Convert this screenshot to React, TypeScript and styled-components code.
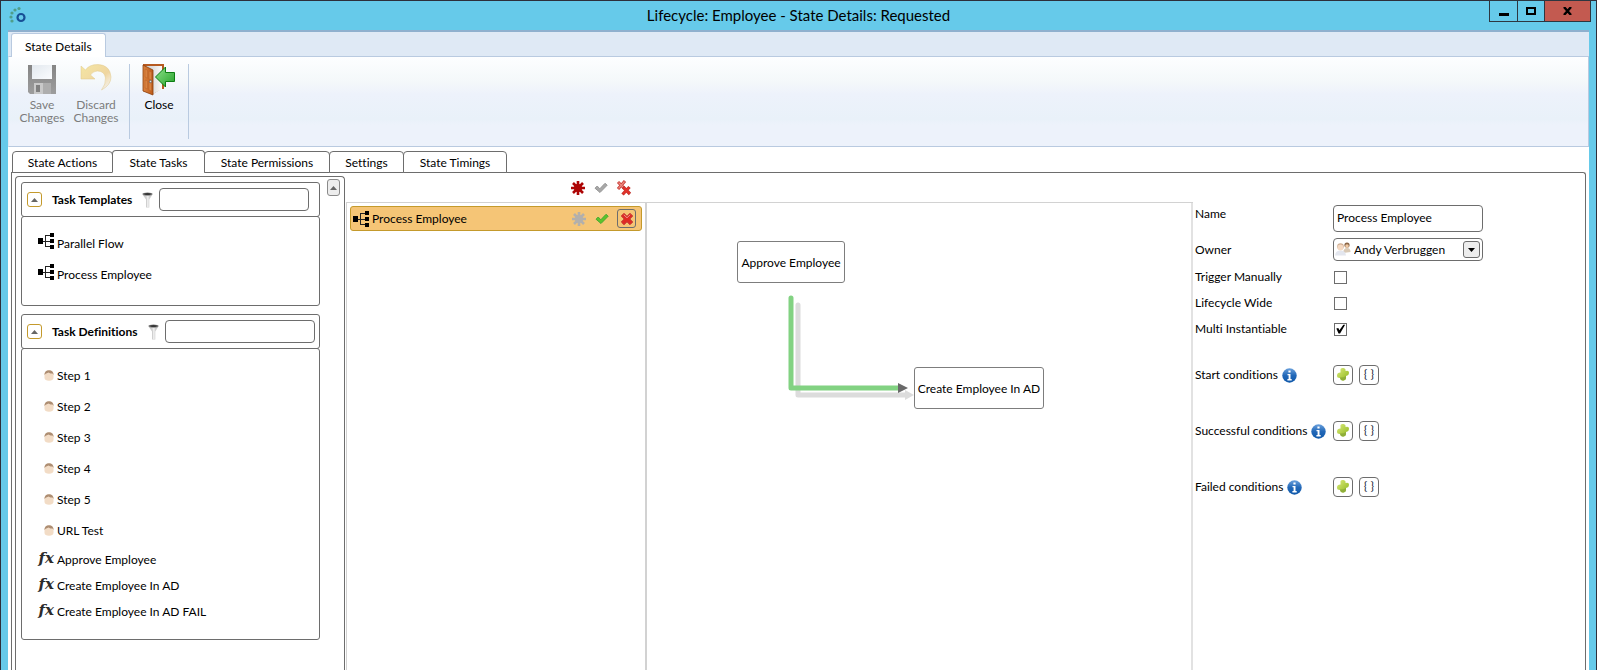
import React from "react";
import styled, { createGlobalStyle, css } from "styled-components";

const line = "#6d6d6d";
const softLine = "#d2d2d2";
const sky = "#66caea";

const GlobalStyle = createGlobalStyle`
  *, *::before, *::after { box-sizing: border-box; }
  html, body { margin: 0; height: 100%; }
  body { background: #fff; overflow: hidden; }
  #root { height: 100%; }
  body, button, input, select {
    font-family: Lato, "Open Sans", sans-serif;
    font-size: 12px;
    line-height: 16px;
    font-variant-ligatures: none;
    color: #000;
  }
  ul { list-style: none; margin: 0; padding: 0; }
  svg { display: block; flex: none; }
`;

/* ---------- window frame ---------- */

const Window = styled.div`
  display: flex;
  flex-direction: column;
  min-height: 100%;
  padding: 0 7px;
  background: ${sky};
  border: 1px solid #2d2f3b;
  border-bottom: 0;
`;

const TitleBar = styled.header`
  position: relative;
  display: flex;
  justify-content: center;
  height: 29px;
  padding-top: 4px;
`;

const Logo = styled.svg`
  position: absolute;
  left: 1px;
  top: 5px;
`;

const WindowTitle = styled.h1`
  margin: 0;
  font-size: 15px;
  line-height: 20px;
  font-weight: 400;
`;

const WindowButtons = styled.div`
  position: absolute;
  right: -2px;
  top: -1px;
  display: flex;
  border: 1px solid #2d3640;
`;

const WindowButton = styled.button<{ $wide?: boolean }>`
  display: flex;
  align-items: center;
  justify-content: center;
  width: ${(p) => (p.$wide ? 46 : 27)}px;
  height: 20px;
  padding: 0;
  border: 0;
  background: ${(p) => (p.$wide ? "#c35a50" : sky)};
  & + & { border-left: 1px solid #2d3640; }
`;

const Client = styled.div`
  flex: 1;
  display: flex;
  flex-direction: column;
  background: #fff;
  border-top: 2px solid #8fb0ce;
`;

/* ---------- ribbon ---------- */

const RibbonTabs = styled.div`
  display: flex;
  align-items: flex-end;
  height: 25px;
  padding-left: 3px;
  margin-bottom: -1px;
  background: #dfe9f5;
`;

const RibbonTab = styled.button`
  position: relative;
  height: 24px;
  padding: 3px 13px 0;
  border: 1px solid #b9cae0;
  border-bottom: 0;
  border-radius: 3px 3px 0 0;
  background: #fff;
`;

const Ribbon = styled.div`
  display: flex;
  height: 91px;
  padding: 7px 0;
  border: 1px solid #b9cae0;
  border-left-color: #dfe9f5;
  background: linear-gradient(#fdfeff, #f4f8fa 28%, #edf2fb 42%, #e9f1f9 70%, #edf2fb 76%);
`;

const RibbonGroup = styled.div<{ $narrow?: boolean }>`
  display: flex;
  justify-content: center;
  gap: 2px;
  height: 75px;
  padding: 0 ${(p) => (p.$narrow ? 3 : 7)}px;
  border-right: 1px solid #b9cae0;
`;

const RibbonButton = styled.button`
  display: flex;
  flex-direction: column;
  align-items: center;
  gap: 2px;
  width: 52px;
  height: 64px;
  padding: 0;
  border: 0;
  background: none;
  line-height: 13px;
  &:disabled { color: #7c7c7c; }
`;

/* ---------- page tabs ---------- */

const Tabs = styled.div`
  display: flex;
  align-items: flex-end;
  height: 26px;
  padding-left: 4px;
  margin-bottom: -1px;
`;

const Tab = styled.button<{ $active?: boolean; $width: number }>`
  position: relative;
  width: ${(p) => p.$width}px;
  height: ${(p) => (p.$active ? 23 : 22)}px;
  padding: 2px 0 0;
  border: 1px solid ${line};
  border-radius: 4px 4px 0 0;
  background: #fff;
  & + & { margin-left: -1px; }
  ${(p) => p.$active && css`border-bottom-color: #fff;`}
`;

const TabPanel = styled.main`
  flex: 1;
  display: flex;
  margin: 0 3px;
  border: 1px solid ${line};
  border-bottom: 0;
  border-radius: 0 3px 0 0;
`;

/* ---------- left side ---------- */

const Sidebar = styled.aside`
  display: flex;
  justify-content: space-between;
  align-items: flex-start;
  flex: none;
  width: 330px;
  margin: 3px 0 0 3px;
  padding: 5px 4px 0 5px;
  border: 1px solid ${line};
  border-bottom: 0;
  border-radius: 4px 4px 0 0;
`;

const Groups = styled.div`
  display: flex;
  flex-direction: column;
  gap: 8px;
  width: 299px;
`;

const GroupHeader = styled.div`
  display: flex;
  align-items: center;
  height: 35px;
  padding-left: 5px;
  border: 1px solid ${line};
  border-radius: 3px;
`;

const GroupTitle = styled.h2`
  margin: 0 10px;
  font-size: 12px;
  line-height: 16px;
  font-weight: 700;
  white-space: nowrap;
`;

const Expander = styled.button`
  display: flex;
  align-items: center;
  justify-content: center;
  flex: none;
  width: 15px;
  height: 15px;
  padding: 0;
  border: 1px solid #c49a2c;
  border-radius: 3px;
  background: #fff;
`;

const FilterInput = styled.input`
  flex: none;
  width: 150px;
  height: 23px;
  margin-left: 6px;
  padding: 0 4px;
  border: 1px solid ${line};
  border-radius: 4px;
`;

const GroupBody = styled.ul`
  margin-top: -1px;
  padding: 12px 16px 14px;
  border: 1px solid ${line};
  border-radius: 3px;
`;

const Item = styled.li<{ $short?: boolean }>`
  display: flex;
  align-items: center;
  gap: 3px;
  height: ${(p) => (p.$short ? 26 : 31)}px;
  padding-bottom: ${(p) => (p.$short ? 0 : 2)}px;
`;

const ItemIcon = styled.span<{ $raised?: boolean }>`
  display: flex;
  justify-content: flex-end;
  width: 16px;
  padding-bottom: ${(p) => (p.$raised ? 5 : 0)}px;
`;

const Fx = styled.span`
  font: italic 700 15px/18px "DejaVu Serif", serif;
  color: #2b2b2b;
`;

const ScrollUp = styled.button`
  display: flex;
  align-items: center;
  justify-content: center;
  width: 13px;
  height: 17px;
  margin-top: -3px;
  padding: 0;
  border: 1px solid #8a8a8a;
  border-radius: 3px;
  background: #ededed;
`;

/* ---------- process list and canvas ---------- */

const Center = styled.section`
  flex: 1;
  display: flex;
  flex-direction: column;
  margin-left: 1px;
`;

const Actions = styled.div`
  display: flex;
  align-items: center;
  gap: 7px;
`;

const ListToolbar = styled(Actions)`
  justify-content: flex-end;
  width: 301px;
  height: 29px;
  padding-right: 15px;
`;

const Split = styled.div`
  flex: 1;
  display: flex;
  border-top: 1px solid ${softLine};
`;

const ProcessList = styled.div`
  width: 301px;
  padding: 3px;
  border-left: 1px solid ${softLine};
  border-right: 2px solid ${softLine};
`;

const ProcessRow = styled.div`
  display: flex;
  align-items: center;
  gap: 3px;
  height: 25px;
  padding: 0 5px 0 2px;
  border: 1px solid #c49a2c;
  border-radius: 3px;
  background: #f5c576;
  ${Actions} { margin-left: auto; }
`;

const IconButton = styled.button<{ $framed?: boolean }>`
  display: flex;
  align-items: center;
  justify-content: center;
  width: ${(p) => (p.$framed ? 19 : 16)}px;
  height: ${(p) => (p.$framed ? 19 : 16)}px;
  padding: 0;
  border: ${(p) => (p.$framed ? `1px solid ${line}` : "0")};
  border-radius: 3px;
  background: none;
`;

const Canvas = styled.div`
  position: relative;
  flex: 1;
  border-right: 2px solid #e2e2e2;
`;

const Node = styled.div<{ $x: number; $y: number; $w: number }>`
  position: absolute;
  left: ${(p) => p.$x}px;
  top: ${(p) => p.$y}px;
  display: flex;
  align-items: center;
  justify-content: center;
  width: ${(p) => p.$w}px;
  height: 42px;
  padding-top: 2px;
  border: 1px solid #7d7d7d;
  border-radius: 3px;
  background: #fff;
  white-space: nowrap;
`;

const Connector = styled.svg`
  position: absolute;
  left: 140px;
  top: 90px;
`;

/* ---------- properties form ---------- */

const Form = styled.form`
  flex: none;
  width: 392px;
  padding: 32px 0 0 2px;
`;

const Field = styled.div<{ $h: number; $top?: boolean }>`
  display: grid;
  grid-template-columns: 138px 150px;
  align-items: ${(p) => (p.$top ? "start" : "center")};
  height: ${(p) => p.$h}px;
`;

const FieldLabel = styled.label<{ $top?: boolean }>`
  display: flex;
  align-items: center;
  gap: 4px;
  padding-top: ${(p) => (p.$top ? 1 : 0)}px;
  white-space: nowrap;
`;

const TextInput = styled.input`
  width: 150px;
  height: 27px;
  padding: 0 3px 2px;
  border: 1px solid ${line};
  border-radius: 4px;
`;

const SelectBox = styled.div`
  position: relative;
`;

const Select = styled.select`
  appearance: none;
  width: 150px;
  height: 23px;
  padding: 0 22px 0 20px;
  border: 1px solid ${line};
  border-radius: 4px;
  background: #fff;
`;

const SelectAvatar = styled.svg`
  position: absolute;
  left: 2px;
  top: 3px;
  pointer-events: none;
`;

const SelectArrow = styled.span`
  position: absolute;
  right: 3px;
  top: 3px;
  display: flex;
  align-items: center;
  justify-content: center;
  width: 17px;
  height: 17px;
  border: 1px solid ${line};
  border-radius: 3px;
  background: #ededed;
  pointer-events: none;
`;

const Checkbox = styled.input`
  appearance: none;
  width: 13px;
  height: 13px;
  margin: 0 1px;
  border: 1px solid ${line};
  background: #fff;
  &:checked::before {
    content: "";
    display: block;
    height: 11px;
    background: #000;
    clip-path: polygon(12% 46%, 30% 42%, 40% 62%, 76% 12%, 92% 12%, 46% 92%, 32% 92%);
  }
`;

const Conditions = styled.div`
  display: flex;
  flex-direction: column;
  gap: 36px;
  padding-top: 23px;
`;

const ConditionButtons = styled.div`
  display: flex;
  gap: 6px;
`;

const ConditionButton = styled.button`
  display: flex;
  align-items: center;
  justify-content: center;
  width: 20px;
  height: 20px;
  padding: 0 0 2px;
  border: 1px solid ${line};
  border-radius: 4px;
  background: #fff;
  color: #1b2a3c;
  white-space: nowrap;
`;

/* ---------- drawings ---------- */

const FlowIcon = () => (
  <svg width="16" height="16" viewBox="0 0 16 16" aria-hidden="true">
    <path d="M4 8.500h9M7.500 2v12M7 2.500h6M7 13.500h6" stroke="#222" fill="none" />
    <path d="M0 5h5v6H0zM12 0h4v4h-4zM12 6h4v4h-4zM12 12h4v4h-4z" />
  </svg>
);

const FaceIcon = () => (
  <svg width="10" height="11" viewBox="0 0 10 11" aria-hidden="true">
    <path d="M.5 4Q1 .5 5 .5T9.500 4V8Q9 10.800 5 10.800.8 10.800.5 8Z" fill="#f2dcc6" />
    <path d="M.4 5Q.5.3 5 .3T9.600 5L8.500 3.600 6.500 3.600 4.500 2.500 1.700 3.800Z" fill="#ad8d72" />
  </svg>
);

const FunnelIcon = () => (
  <svg width="11" height="16" viewBox="0 0 11 16" aria-hidden="true">
    <path d="M.5 2.500h10L7.300 7.500V15.500H4V7.500Z" fill="#cfcfcf" />
    <path d="M4.500 4h2.200v11.500H5V7.500Z" fill="#ececec" />
    <ellipse cx="5.500" cy="2" rx="5" ry="1.500" fill="#777" />
    <ellipse cx="5.500" cy="2" rx="3.500" ry=".8" fill="#222" />
  </svg>
);

const Caret = ({ down, color = "#666" }: { down?: boolean; color?: string }) => (
  <svg width="7" height="4" viewBox="0 0 7 4" aria-hidden="true">
    <path d={down ? "M0 0h7L3.500 4Z" : "M0 4h7L3.500 0Z"} fill={color} />
  </svg>
);

const Asterisk = ({ color }: { color: string }) => (
  <svg width="16" height="16" viewBox="0 0 16 16" aria-hidden="true">
    <path d="M8 1v14M1 8h14M3 3l10 10M13 3L3 13" stroke={color} strokeWidth="2.600" />
    <circle cx="8" cy="8" r="4" fill={color} />
  </svg>
);

const Check = ({ fill, edge }: { fill: string; edge: string }) => (
  <svg width="16" height="16" viewBox="0 0 16 16" aria-hidden="true">
    <path d="M2 8.200L4.200 6 6.800 8.800 12 3.300 14.200 5.200 7 12.500Z" fill={fill} stroke={edge} />
  </svg>
);

const Cross = () => (
  <svg width="14" height="14" viewBox="0 0 14 14" aria-hidden="true">
    <path
      d="M4 1.300L7 4.300 10 1.300 12.700 4 9.800 7l2.900 3-2.700 2.700L7 9.800l-3 2.900L1.300 10 4.200 7 1.300 4Z"
      fill="#e02a24"
      stroke="#c23a33"
    />
    <path d="M3.800 2.800L7 5.800l3.200-3" stroke="#ee9188" fill="none" />
  </svg>
);

const DoubleCross = () => (
  <svg width="16" height="16" viewBox="0 0 16 16" aria-hidden="true">
    <path d="M2 2l6 6M9 1L2 9" stroke="#c93a33" strokeWidth="3" />
    <path d="M2.500 2.500l5 5M8.500 1.500l-6 7" stroke="#ec8a82" strokeWidth="1.200" />
    <path d="M7 7l7 7M13.500 7L6.500 14.500" stroke="#c0302a" strokeWidth="3.200" />
    <path d="M7.500 7.500l6 6M13 7.500l-6 6.500" stroke="#e2332b" strokeWidth="2" />
  </svg>
);

const InfoIcon = () => (
  <svg width="15" height="15" viewBox="0 0 15 15" aria-hidden="true">
    <defs>
      <linearGradient id="info" x2="0" y2="1">
        <stop stopColor="#6aa0dc" />
        <stop offset=".5" stopColor="#2268b8" />
        <stop offset="1" stopColor="#0f58aa" />
      </linearGradient>
    </defs>
    <circle cx="7.500" cy="7.500" r="7.200" fill="url(#info)" />
    <path d="M6.400 2.500h2.200v2H6.400zM5.500 6h3v5h1.200v1.400H5.400V11h1.200V7.300H5.500z" fill="#fff" />
  </svg>
);

const PlusIcon = () => (
  <svg width="14" height="15" viewBox="0 0 14 15" aria-hidden="true">
    <defs>
      <linearGradient id="plus" x2="1" y2="1">
        <stop stopColor="#dcec7c" />
        <stop offset="1" stopColor="#8db51b" />
      </linearGradient>
    </defs>
    <path
      d="M4.500 2Q5.500.5 7.500 1q2.500.5 2 3 3.500-1 3.500 1.500 0 3-3 3.500.5 4-2.500 4.500-3 .5-3.500-2.500Q.8 11 1 8.500 1 5.500 4.500 5.500Z"
      fill="url(#plus)"
    />
    <path d="M4 10.500q3 .5 6-1.500.5 4-2.500 4.500-3 .5-3.500-3Z" fill="#8fae3a" />
  </svg>
);

const SaveIcon = () => (
  <svg width="32" height="32" viewBox="0 0 32 32" aria-hidden="true">
    <defs>
      <linearGradient id="disk" x2="0" y2="1">
        <stop stopColor="#858585" />
        <stop offset="1" stopColor="#9d9d9d" />
      </linearGradient>
      <linearGradient id="disklabel" x2="1" y2="1">
        <stop stopColor="#e2e8ee" />
        <stop offset="1" stopColor="#fafcfe" />
      </linearGradient>
    </defs>
    <path d="M2 1h28v29H4l-2-2Z" fill="url(#disk)" />
    <path d="M6 1h20v14H6z" fill="url(#disklabel)" />
    <path d="M8 19h17v11H8z" fill="#c9c9c9" />
    <path d="M10 21h4v7h-4z" fill="#808080" />
    <path d="M17 19h8v11h-8z" fill="#aeaeae" />
  </svg>
);

const UndoIcon = () => (
  <svg width="32" height="32" viewBox="0 0 32 32" aria-hidden="true">
    <defs>
      <linearGradient id="undo" x2="1" y2="1">
        <stop stopColor="#f4e6a4" />
        <stop offset=".6" stopColor="#f0d6a0" />
        <stop offset="1" stopColor="#f3dcb4" stopOpacity="0" />
      </linearGradient>
    </defs>
    <path
      d="M1 2v13h14l-4.500-4Q13 7 17.500 7q7 0 8 7 .5 6-4 12Q31 21 31 13 30 1 18 .5 9 .5 5.500 6Z"
      fill="url(#undo)"
      stroke="#e2c98c"
      strokeOpacity=".5"
    />
  </svg>
);

const DoorIcon = () => (
  <svg width="34" height="32" viewBox="0 0 34 32" aria-hidden="true">
    <defs>
      <linearGradient id="inside" x2="1">
        <stop stopColor="#ccc" />
        <stop offset="1" stopColor="#fafafa" />
      </linearGradient>
      <linearGradient id="door" x2="1">
        <stop stopColor="#dd8440" />
        <stop offset="1" stopColor="#bd5a18" />
      </linearGradient>
      <linearGradient id="arrow" x2="1" y2="1">
        <stop stopColor="#8ee28b" />
        <stop offset="1" stopColor="#25a129" />
      </linearGradient>
    </defs>
    <path d="M1 0h21v25h-3l-8 5L1 27Z" fill="#b65a20" />
    <path d="M4 2h16v23l-9 5Z" fill="url(#inside)" />
    <path d="M1 1l10 5v25L1 27Z" fill="url(#door)" stroke="#8c3f0d" strokeWidth=".8" />
    <path
      d="M3 5l2.500 1.200v8L3 13ZM7 7l2.500 1.200v8L7 15ZM3 16l2.500 1v8L3 24ZM7 18l2.500 1v8L7 26Z"
      fill="#d9823f"
      stroke="#b7622a"
      strokeWidth=".5"
    />
    <circle cx="8.500" cy="17.500" r="1.200" fill="#ddd" stroke="#444" strokeWidth=".6" />
    <path d="M13.500 13L23.500 3v5.500h9v9h-9V23Z" fill="url(#arrow)" stroke="#0c7d13" />
  </svg>
);

const PeopleIcon = () => (
  <SelectAvatar width="16" height="16" viewBox="0 0 16 16" aria-hidden="true">
    <path d="M8 12q.5-5 4-5 3.500 0 3.500 4Z" fill="#d9c9b5" />
    <circle cx="12" cy="4" r="2.600" fill="#8a6445" />
    <circle cx="12" cy="5" r="1.800" fill="#f0c8a2" />
    <path d="M0 14.500Q.5 9.500 5.500 9.500T11 14.500Z" fill="#e3e6ee" />
    <circle cx="5.500" cy="5.500" r="3.300" fill="#cfae93" />
    <circle cx="5.500" cy="6.500" r="2.900" fill="#f5d9c2" />
  </SelectAvatar>
);

const AppLogo = () => (
  <Logo width="20" height="20" viewBox="0 0 20 20" aria-hidden="true">
    <circle cx="12" cy="11.500" r="3.500" fill="none" stroke="#174f96" strokeWidth="2.200" />
    {[[3, 15], [2, 11], [3, 7], [6, 4], [10, 2.5]].map(([x, y]) => (
      <circle key={`${x}-${y}`} cx={x} cy={y} r="1.600" fill="#4f9e8a" />
    ))}
  </Logo>
);

/* ---------- page ---------- */

const tabs = [
  { label: "State Actions", width: 101 },
  { label: "State Tasks", width: 93, active: true },
  { label: "State Permissions", width: 126 },
  { label: "Settings", width: 75 },
  { label: "State Timings", width: 104 },
];
const templates = ["Parallel Flow", "Process Employee"];
const steps = ["Step 1", "Step 2", "Step 3", "Step 4", "Step 5", "URL Test"];
const functions = ["Approve Employee", "Create Employee In AD", "Create Employee In AD FAIL"];
const conditions = ["Start conditions", "Successful conditions", "Failed conditions"];
const flags = [
  { id: "trigger", label: "Trigger Manually", checked: false },
  { id: "wide", label: "Lifecycle Wide", checked: false },
  { id: "multi", label: "Multi Instantiable", checked: true },
];

const Group = ({ title, children }: { title: string; children: React.ReactNode }) => (
  <section>
    <GroupHeader>
      <Expander aria-label={`Collapse ${title}`}>
        <Caret />
      </Expander>
      <GroupTitle>{title}</GroupTitle>
      <FunnelIcon />
      <FilterInput type="text" aria-label={`Filter ${title}`} />
    </GroupHeader>
    <GroupBody>{children}</GroupBody>
  </section>
);

export default function App() {
  return (
    <>
      <GlobalStyle />
      <Window>
        <TitleBar>
          <AppLogo />
          <WindowTitle>Lifecycle: Employee - State Details: Requested</WindowTitle>
          <WindowButtons>
            <WindowButton aria-label="Minimize">
              <svg width="10" height="12"><path d="M0 8h10v3H0z" /></svg>
            </WindowButton>
            <WindowButton aria-label="Maximize">
              <svg width="10" height="8"><path d="M1 1h8v6H1z" fill="none" stroke="#000" strokeWidth="2" /></svg>
            </WindowButton>
            <WindowButton $wide aria-label="Close window">
              <svg width="9" height="8"><path d="M1 0l7 8M8 0L1 8" stroke="#000" strokeWidth="2.400" /></svg>
            </WindowButton>
          </WindowButtons>
        </TitleBar>
        <Client>
          <RibbonTabs>
            <RibbonTab>State Details</RibbonTab>
          </RibbonTabs>
          <Ribbon>
            <RibbonGroup>
              <RibbonButton disabled>
                <SaveIcon />
                <span>Save<br />Changes</span>
              </RibbonButton>
              <RibbonButton disabled>
                <UndoIcon />
                <span>Discard<br />Changes</span>
              </RibbonButton>
            </RibbonGroup>
            <RibbonGroup $narrow>
              <RibbonButton>
                <DoorIcon />
                <span>Close</span>
              </RibbonButton>
            </RibbonGroup>
          </Ribbon>
          <Tabs role="tablist">
            {tabs.map((t) => (
              <Tab key={t.label} role="tab" aria-selected={!!t.active} $active={t.active} $width={t.width}>
                {t.label}
              </Tab>
            ))}
          </Tabs>
          <TabPanel>
            <Sidebar>
              <Groups>
                <Group title="Task Templates">
                  {templates.map((t) => (
                    <Item key={t}>
                      <ItemIcon $raised><FlowIcon /></ItemIcon>
                      {t}
                    </Item>
                  ))}
                </Group>
                <Group title="Task Definitions">
                  {steps.map((t) => (
                    <Item key={t}>
                      <ItemIcon><FaceIcon /></ItemIcon>
                      {t}
                    </Item>
                  ))}
                  {functions.map((t) => (
                    <Item key={t} $short>
                      <ItemIcon $raised><Fx aria-hidden="true">fx</Fx></ItemIcon>
                      {t}
                    </Item>
                  ))}
                </Group>
              </Groups>
              <ScrollUp aria-label="Scroll up">
                <Caret />
              </ScrollUp>
            </Sidebar>
            <Center>
              <ListToolbar>
                <IconButton aria-label="New"><Asterisk color="#ad0505" /></IconButton>
                <IconButton aria-label="Apply"><Check fill="#a8a8a8" edge="#989898" /></IconButton>
                <IconButton aria-label="Remove all"><DoubleCross /></IconButton>
              </ListToolbar>
              <Split>
                <ProcessList>
                  <ProcessRow>
                    <FlowIcon />
                    Process Employee
                    <Actions>
                      <IconButton aria-label="New item"><Asterisk color="#b3b0ac" /></IconButton>
                      <IconButton aria-label="Apply item"><Check fill="#5cc42a" edge="#4aa834" /></IconButton>
                      <IconButton $framed aria-label="Remove item"><Cross /></IconButton>
                    </Actions>
                  </ProcessRow>
                </ProcessList>
                <Canvas>
                  <Connector width="130" height="110" viewBox="0 0 130 110" aria-hidden="true">
                    <path d="M11 12v90h108" fill="none" stroke="#dcdcdc" strokeWidth="5" strokeLinecap="round" strokeLinejoin="round" />
                    <path d="M118 97l9 5-9 5Z" fill="#dcdcdc" />
                    <path d="M4 5v90h107" fill="none" stroke="#82d282" strokeWidth="5" strokeLinecap="round" strokeLinejoin="round" />
                    <path d="M111 90l10 5-10 5Z" fill="#696969" />
                  </Connector>
                  <Node $x={90} $y={38} $w={108}>Approve Employee</Node>
                  <Node $x={267} $y={164} $w={130}>Create Employee In AD</Node>
                </Canvas>
              </Split>
            </Center>
            <Form onSubmit={(e) => e.preventDefault()}>
              <Field $h={30} $top>
                <FieldLabel $top htmlFor="name">Name</FieldLabel>
                <TextInput id="name" type="text" defaultValue="Process Employee" />
              </Field>
              <Field $h={29}>
                <FieldLabel htmlFor="owner">Owner</FieldLabel>
                <SelectBox>
                  <Select id="owner" defaultValue="andy">
                    <option value="andy">Andy Verbruggen</option>
                  </Select>
                  <PeopleIcon />
                  <SelectArrow><Caret down color="#000" /></SelectArrow>
                </SelectBox>
              </Field>
              {flags.map((f) => (
                <Field key={f.id} $h={26}>
                  <FieldLabel htmlFor={f.id}>{f.label}</FieldLabel>
                  <Checkbox id={f.id} type="checkbox" defaultChecked={f.checked} />
                </Field>
              ))}
              <Conditions>
                {conditions.map((c) => (
                  <Field key={c} $h={20}>
                    <FieldLabel as="span">{c}<InfoIcon /></FieldLabel>
                    <ConditionButtons>
                      <ConditionButton type="button" aria-label={`Add to ${c}`}><PlusIcon /></ConditionButton>
                      <ConditionButton type="button" aria-label={`Edit ${c}`}>{"{ }"}</ConditionButton>
                    </ConditionButtons>
                  </Field>
                ))}
              </Conditions>
            </Form>
          </TabPanel>
        </Client>
      </Window>
    </>
  );
}
